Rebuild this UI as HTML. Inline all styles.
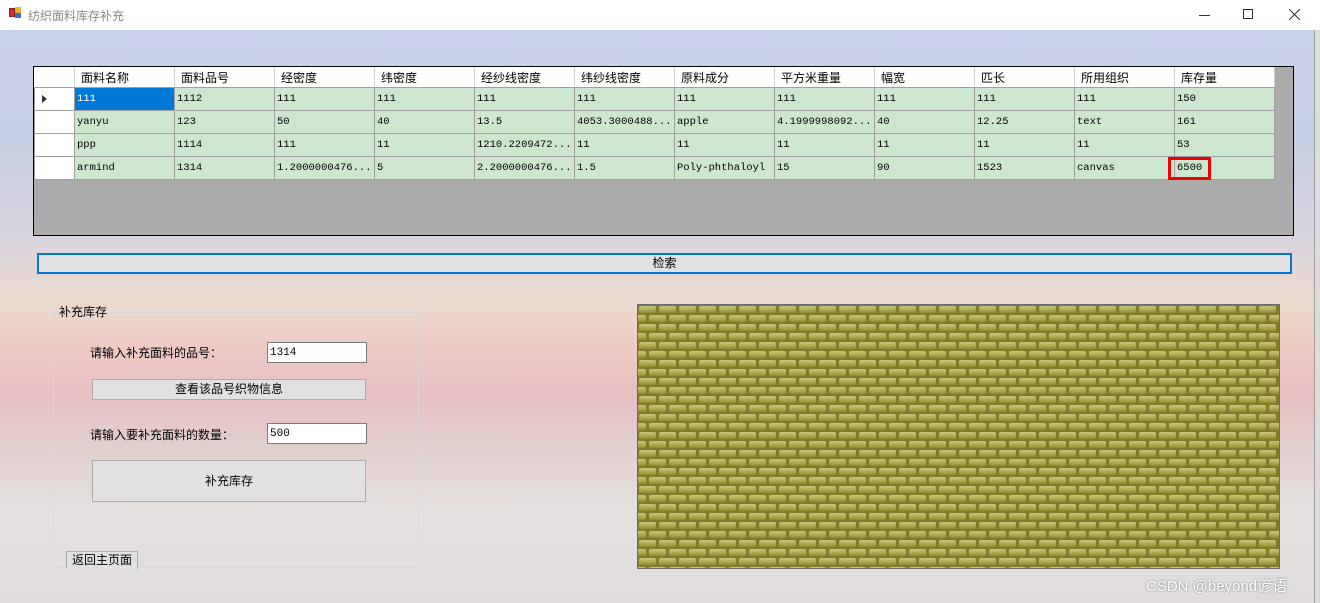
<!DOCTYPE html>
<html><head><meta charset="utf-8"><style>
*{margin:0;padding:0;box-sizing:border-box}
body{width:1320px;height:603px;position:relative;overflow:hidden;font-family:"Liberation Sans","Noto Sans CJK SC",sans-serif;font-size:12px;color:#000;background:#fff}
.abs{position:absolute}
#bg{left:0;top:30px;width:1314px;height:573px;background:linear-gradient(180deg,#c9d2e8 0%,#c6cfe4 20%,#d9d4df 36%,#ecd9cd 48%,#edc9c4 56%,#e6c0c3 64%,#e2d2d0 74%,#e4e0df 84%,#e0dcdc 100%)}
#bg2{left:1314px;top:30px;width:6px;height:573px;background:#dcdcdc;border-left:1px solid #a0a0a0}
#grid{left:33px;top:66px;width:1261px;height:170px;border:1px solid #000;background:#ababab}
table{border-collapse:collapse;position:absolute;left:0;top:0}
td{border:1px solid #a0a0a0;height:23px;width:100px;padding:0 2px;font-family:"Liberation Mono",monospace;font-size:10.5px;background:#cde7cf;white-space:nowrap;overflow:hidden}
tr.h td{background:#fff;height:20px;font-family:"Liberation Sans","Noto Sans CJK SC",sans-serif;font-size:12px;padding-left:6px;border-color:#fff #d0d0d0 #a0a0a0 #fff}
td.rh{width:40px;background:#fff}
td.sel{background:#0078d7;color:#fff}
.btn{background:#e1e1e1;border:1px solid #adadad;text-align:center;font-family:"Liberation Sans","Noto Sans CJK SC",sans-serif}
input{position:absolute;border:1px solid #7a7a7a;background:#fff;font-family:"Liberation Mono",monospace;font-size:11px;padding-left:2px;height:21px;width:100px}
#img{left:637px;top:304px;width:643px;height:265px;border:1px solid #6c6c6c;overflow:hidden;background:#8f8b35}
</style></head><body>
<div class="abs" style="left:0;top:0;width:1320px;height:30px;background:#fff"></div>
<div class="abs" style="left:9px;top:8px;width:6px;height:9px;background:#c33;border:1px solid #822"></div>
<div class="abs" style="left:15px;top:7px;width:6px;height:6px;background:#e9b22c"></div>
<div class="abs" style="left:15px;top:13px;width:6px;height:5px;background:#3a6fd0"></div>
<div class="abs" style="left:28px;top:7px;color:#888;font-size:12px">纺织面料库存补充</div>
<div class="abs" style="left:1199px;top:15px;width:11px;height:1px;background:#333"></div>
<div class="abs" style="left:1243px;top:9px;width:10px;height:10px;border:1px solid #333"></div>
<svg class="abs" style="left:1289px;top:9px" width="11" height="11"><path d="M0 0L11 11M11 0L0 11" stroke="#333" stroke-width="1"/></svg>
<div id="bg" class="abs"></div>
<div id="bg2" class="abs"></div>
<div id="grid" class="abs">
<table>
<tr class="h"><td class="rh"></td><td>面料名称</td><td>面料品号</td><td>经密度</td><td>纬密度</td><td>经纱线密度</td><td>纬纱线密度</td><td>原料成分</td><td>平方米重量</td><td>幅宽</td><td>匹长</td><td>所用组织</td><td>库存量</td></tr>
<tr><td class="rh" style="position:relative"><span style="position:absolute;left:7px;top:7px;width:0;height:0;border-left:5px solid #333;border-top:4px solid transparent;border-bottom:4px solid transparent"></span></td><td class="sel">111</td><td>1112</td><td>111</td><td>111</td><td>111</td><td>111</td><td>111</td><td>111</td><td>111</td><td>111</td><td>111</td><td>150</td></tr>
<tr><td class="rh"></td><td>yanyu</td><td>123</td><td>50</td><td>40</td><td>13.5</td><td>4053.3000488...</td><td>apple</td><td>4.1999998092...</td><td>40</td><td>12.25</td><td>text</td><td>161</td></tr>
<tr><td class="rh"></td><td>ppp</td><td>1114</td><td>111</td><td>11</td><td>1210.2209472...</td><td>11</td><td>11</td><td>11</td><td>11</td><td>11</td><td>11</td><td>53</td></tr>
<tr><td class="rh"></td><td>armind</td><td>1314</td><td>1.2000000476...</td><td>5</td><td>2.2000000476...</td><td>1.5</td><td>Poly-phthaloyl</td><td>15</td><td>90</td><td>1523</td><td>canvas</td><td>6500</td></tr>
</table>
</div>
<div class="abs" style="left:1168px;top:157px;width:43px;height:23px;border:3px solid #e00"></div>
<div class="abs btn" style="left:37px;top:253px;width:1255px;height:21px;border:2px solid #0078d7;line-height:17px">检索</div>
<div class="abs" style="left:53px;top:312px;width:366px;height:255px;border:1px solid #d8d8d8"></div>
<div class="abs" style="left:57px;top:303px;padding:0 2px;background:#ecd6cc">补充库存</div>
<div class="abs" style="left:90px;top:344px">请输入补充面料的品号：</div>
<input style="left:267px;top:342px" value="1314">
<div class="abs btn" style="left:92px;top:379px;width:274px;height:21px;line-height:19px">查看该品号织物信息</div>
<div class="abs" style="left:90px;top:426px">请输入要补充面料的数量：</div>
<input style="left:267px;top:423px" value="500">
<div class="abs btn" style="left:92px;top:460px;width:274px;height:42px;line-height:40px">补充库存</div>
<div class="abs btn" style="left:66px;top:551px;width:72px;height:18px;line-height:17px;border-bottom:none">返回主页面</div>
<div id="img" class="abs">
<svg width="643" height="265">
<defs>
<linearGradient id="g" x1="0" y1="0" x2="0" y2="1"><stop offset="0" stop-color="#c9c57c"/><stop offset="0.5" stop-color="#b1ad55"/><stop offset="1" stop-color="#8e8a32"/></linearGradient>
<pattern id="p" width="20" height="18" patternUnits="userSpaceOnUse">
<rect width="20" height="18" fill="#7f7b2a"/>
<rect x="1" y="1" width="17" height="7" rx="2" fill="url(#g)"/>
<rect x="11" y="10" width="17" height="7" rx="2" fill="url(#g)"/>
<rect x="-9" y="10" width="17" height="7" rx="2" fill="url(#g)"/>
</pattern>
</defs>
<rect width="643" height="265" fill="url(#p)"/>
</svg>
</div>
<div class="abs" style="left:1146px;top:575px;font-size:15px;color:#fff;text-shadow:0 0 2px #777">CSDN @beyond谚语</div>
</body></html>
